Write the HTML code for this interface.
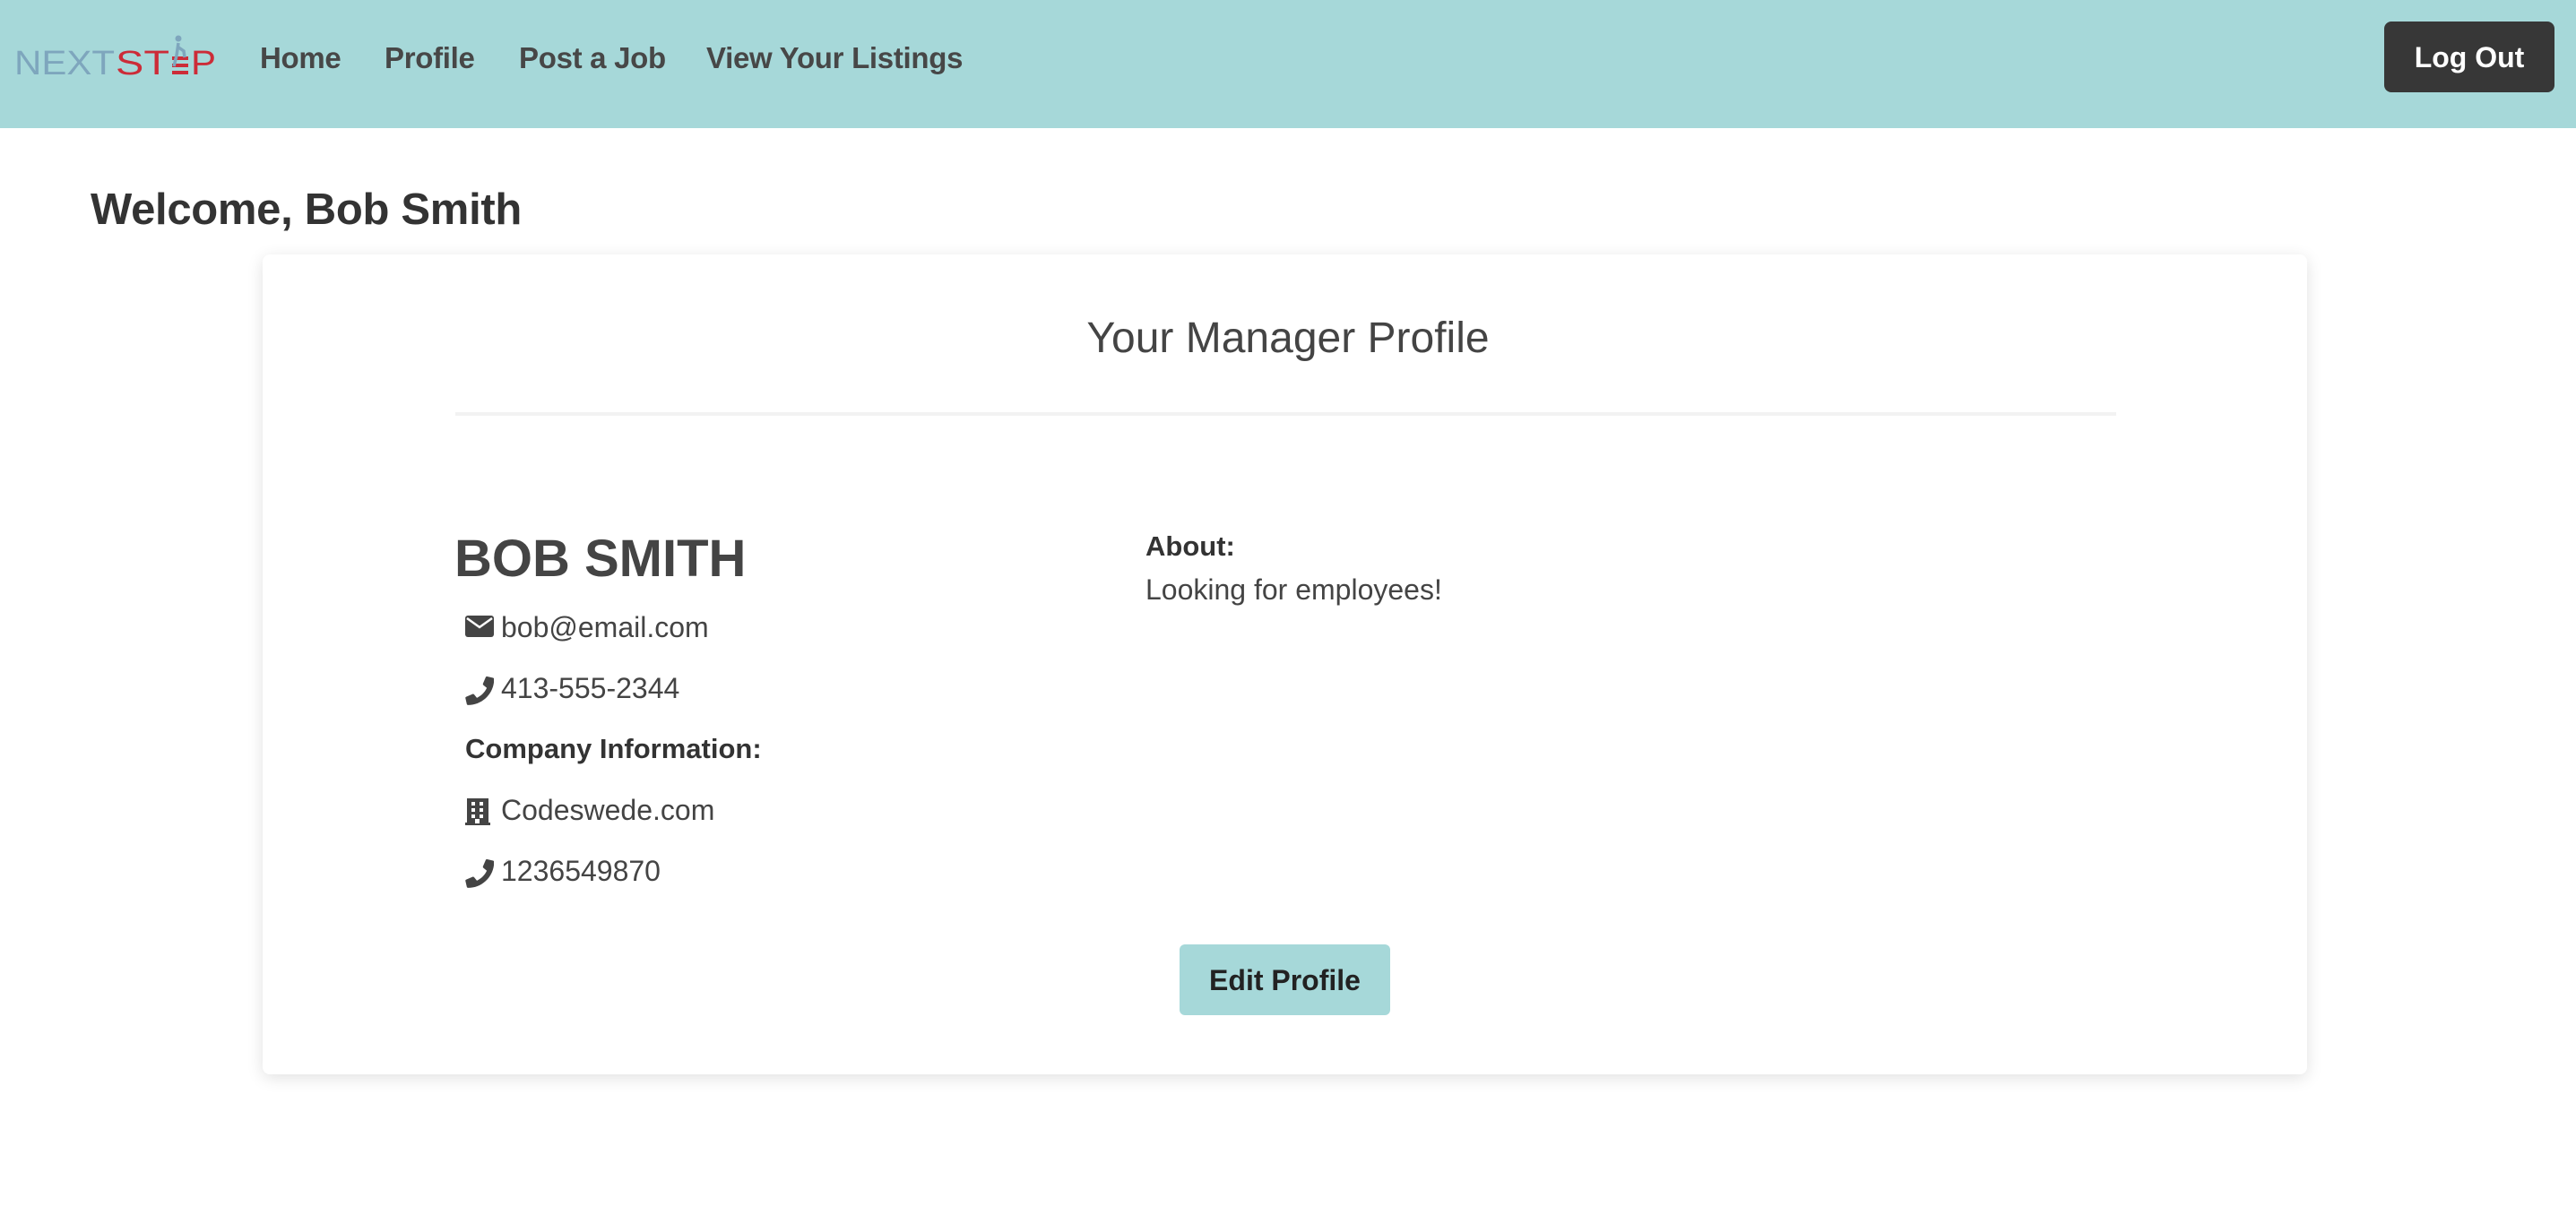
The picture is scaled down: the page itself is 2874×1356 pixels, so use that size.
<!DOCTYPE html>
<html><head><meta charset="utf-8"><style>
*{margin:0;padding:0;box-sizing:border-box}
body{width:2874px;height:1356px;background:#fff;font-family:"Liberation Sans",Arial,sans-serif;color:#444;position:relative;overflow:hidden}
.nav{position:absolute;left:0;top:0;width:2874px;height:143px;background:#a6d8d9}
.nav a{position:absolute;top:46px;font-size:33px;font-weight:bold;color:#474747;text-decoration:none;letter-spacing:-0.3px}
.logout{position:absolute;left:2660px;top:24px;width:190px;height:79px;background:#373737;border-radius:8px;color:#fff;font-weight:bold;font-size:32px;text-align:center;line-height:81px}
h1{position:absolute;left:101px;top:206px;font-size:49px;font-weight:bold;color:#333;letter-spacing:-0.3px}
.card{position:absolute;left:293px;top:284px;width:2281px;height:915px;background:#fff;border-radius:8px;box-shadow:0 4px 18px rgba(0,0,0,0.12)}
.t{position:absolute;top:350px;left:0;width:2874px;text-align:center;font-size:48px;color:#444}
.hr{position:absolute;left:508px;top:460px;width:1853px;height:4px;background:#f2f2f2}
.name{position:absolute;left:507px;top:590px;font-size:58px;font-weight:bold;color:#444}
.row{position:absolute;left:519px;font-size:32px;color:#444;height:40px;line-height:40px}
.row svg{position:absolute;left:0;top:7px}
.row span{position:absolute;left:40px;white-space:nowrap}
.b{font-weight:bold;color:#333;font-size:31px}
.edit{position:absolute;left:1316px;top:1054px;width:235px;height:79px;background:#a6d8d9;border-radius:6px;font-size:32px;font-weight:bold;color:#222;text-align:center;line-height:81px}
</style></head><body>
<div class="nav">
<svg style="position:absolute;left:16px;top:38px" width="230" height="50" viewBox="0 0 230 50">
<text x="0" y="45" font-family="Liberation Sans,sans-serif" font-size="38" fill="#7ea6bd" textLength="112" lengthAdjust="spacingAndGlyphs">NEXT</text>
<text x="113" y="45" font-family="Liberation Sans,sans-serif" font-size="38" fill="#cc2c38" textLength="60" lengthAdjust="spacingAndGlyphs">ST</text>
<rect x="176" y="25" width="18" height="4" fill="#cc2c38"/><rect x="176" y="33" width="18" height="4" fill="#cc2c38"/><rect x="176" y="41" width="18" height="4" fill="#cc2c38"/>
<circle cx="183" cy="5" r="3.5" fill="#7ea6bd"/><path d="M183 10 L181 24 M182 14 L189 19 L190 26 M181 24 L178 36" stroke="#7ea6bd" stroke-width="3.5" fill="none"/>
<text x="197" y="45" font-family="Liberation Sans,sans-serif" font-size="38" fill="#cc2c38" textLength="28" lengthAdjust="spacingAndGlyphs">P</text>
</svg>
<a style="left:290px">Home</a>
<a style="left:429px">Profile</a>
<a style="left:579px">Post a Job</a>
<a style="left:788px">View Your Listings</a>
<div class="logout">Log Out</div>
</div>
<h1>Welcome, Bob Smith</h1>
<div class="card"></div>
<div class="t">Your Manager Profile</div>
<div class="hr"></div>
<div class="name">BOB SMITH</div>
<div class="row" style="top:680px"><svg width="32" height="26" viewBox="0 0 32 26"><rect x="0" y="0" width="32" height="24" rx="3" fill="#444"/><path d="M2 3 L16 13 L30 3" stroke="#fff" stroke-width="2.5" fill="none"/></svg><span>bob@email.com</span></div>
<div class="row" style="top:748px"><svg width="32" height="32" viewBox="0 0 512 512"><path fill="#444" d="M497 24l-104-24c-11-3-23 3-27 14l-48 112c-4 10-1 21 7 28l61 50c-36 77-99 141-177 177l-50-61c-7-8-18-11-28-7l-112 48c-11 5-17 16-14 27l24 104c3 11 12 18 23 18 256 0 464-208 464-464 0-11-8-20-18-23z"/></svg><span>413-555-2344</span></div>
<div class="row b" style="top:816px;left:519px"><span style="left:0">Company Information:</span></div>
<div class="row" style="top:884px"><svg width="28" height="30" viewBox="0 0 28 30"><rect x="2" y="0" width="24" height="28" fill="#444"/><rect x="0" y="27" width="28" height="3" fill="#444"/><g fill="#fff"><rect x="7" y="4" width="4" height="4"/><rect x="16" y="4" width="4" height="4"/><rect x="7" y="11" width="4" height="4"/><rect x="16" y="11" width="4" height="4"/><rect x="7" y="18" width="4" height="4"/><rect x="16" y="18" width="4" height="4"/><rect x="11" y="23" width="5" height="5"/></g></svg><span>Codeswede.com</span></div>
<div class="row" style="top:952px"><svg width="32" height="32" viewBox="0 0 512 512"><path fill="#444" d="M497 24l-104-24c-11-3-23 3-27 14l-48 112c-4 10-1 21 7 28l61 50c-36 77-99 141-177 177l-50-61c-7-8-18-11-28-7l-112 48c-11 5-17 16-14 27l24 104c3 11 12 18 23 18 256 0 464-208 464-464 0-11-8-20-18-23z"/></svg><span>1236549870</span></div>
<div class="row b" style="top:590px;left:1278px"><span style="left:0">About:</span></div>
<div class="row" style="top:638px;left:1278px"><span style="left:0">Looking for employees!</span></div>
<div class="edit">Edit Profile</div>
</body></html>
